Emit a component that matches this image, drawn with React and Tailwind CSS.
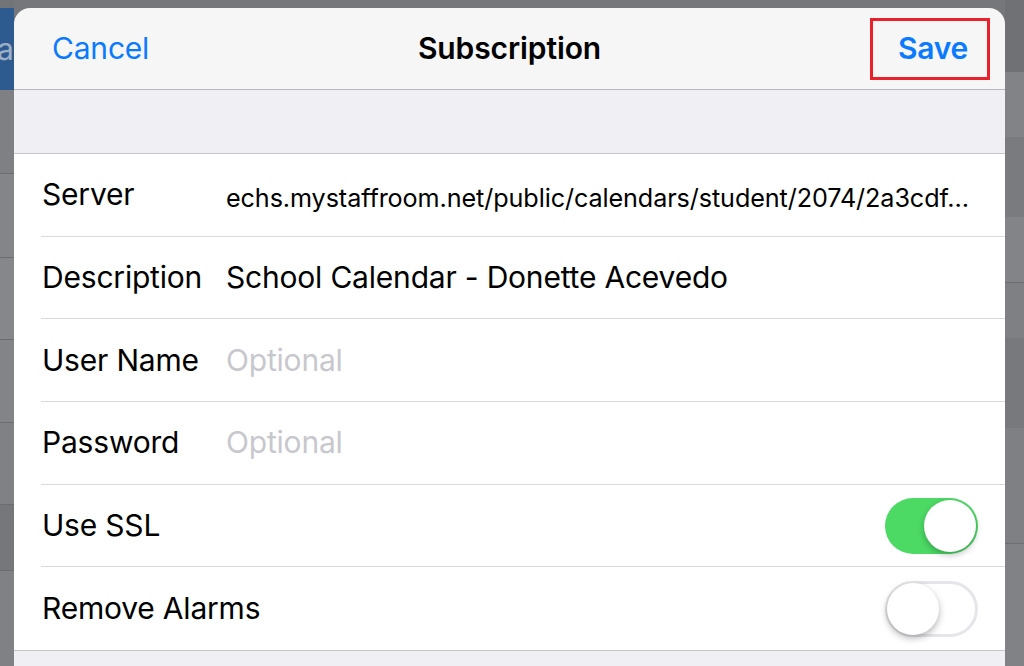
import React from "react";

const leftBands = [
  { h: 8, c: "bg-[#737478]" },
  { h: 82, c: "bg-[#2d5b90]", text: true },
  { h: 83, c: "bg-[#7f8084]" },
  { h: 1, c: "bg-[#6c6d71]" },
  { h: 83, c: "bg-[#848589]" },
  { h: 1, c: "bg-[#6c6d71]" },
  { h: 81, c: "bg-[#86878b]" },
  { h: 1, c: "bg-[#6c6d71]" },
  { h: 82, c: "bg-[#838488]" },
  { h: 1, c: "bg-[#6c6d71]" },
  { h: 81, c: "bg-[#808185]" },
  { h: 1, c: "bg-[#6c6d71]" },
  { h: 65, c: "bg-[#76777b]" },
  { h: 1, c: "bg-[#6c6d71]" },
  { h: 96, c: "bg-[#808185]" },
];

const rightBands = [
  { h: 72, c: "bg-[#707175]" },
  { h: 65, c: "bg-[#828387]" },
  { h: 80, c: "bg-[#7a7b7f]" },
  { h: 65, c: "bg-[#838488]" },
  { h: 1, c: "bg-[#6c6d71]" },
  { h: 55, c: "bg-[#7f8084]" },
  { h: 90, c: "bg-[#78797d]" },
  { h: 115, c: "bg-[#7f8084]" },
  { h: 1, c: "bg-[#6c6d71]" },
  { h: 222, c: "bg-[#818286]" },
];

function Toggle({ on }) {
  if (on) {
    return (
      <div className="w-[93px] h-[56px] rounded-full bg-[#4cd964] flex items-center justify-end pr-[2px]">
        <div className="w-[52px] h-[52px] rounded-full bg-white shadow-[0_3px_6px_rgba(0,0,0,0.25)]" />
      </div>
    );
  }
  return (
    <div className="w-[93px] h-[56px] rounded-full bg-white border-[3px] border-[#e6e6ea] flex items-center">
      <div className="w-[52px] h-[52px] -ml-[1px] rounded-full bg-white shadow-[0_3px_7px_rgba(0,0,0,0.3)]" />
    </div>
  );
}

function Row({ label, children, last }) {
  return (
    <div className={`pl-[27px] bg-white ${last ? "border-b border-[#c8c7cc]" : ""}`}>
      <div
        className={`h-[82.7px] flex items-center pr-[27px] ${
          last ? "" : "border-b border-[#d9d9dd]"
        }`}
      >
        <div className="w-[185px] shrink-0 pl-[1px] text-[30px] text-black tracking-[-0.2px] whitespace-nowrap">
          {label}
        </div>
        <div className="flex-1 min-w-0 flex items-center">{children}</div>
      </div>
    </div>
  );
}

export default function App() {
  return (
    <div
      className="w-[1024px] h-[666px] overflow-hidden flex bg-[#76777b]"
      style={{ fontFamily: "Inter, 'Liberation Sans', sans-serif" }}
    >
      <div className="w-[14px] shrink-0 flex flex-col">
        {leftBands.map((b, i) => (
          <div
            key={i}
            className={`${b.c} shrink-0 overflow-hidden flex items-center`}
            style={{ height: b.h }}
          >
            {b.text && (
              <span className="ml-[-3px] text-[30px] leading-none text-[#9fb0c6] whitespace-nowrap">
                a
              </span>
            )}
          </div>
        ))}
      </div>

      <div className="w-[991px] shrink-0 mt-[8px] flex flex-col">
        <div className="h-[82px] shrink-0 bg-[#f6f6f7] rounded-t-[16px] border-b border-[#b8b8bd] flex items-center pl-[38px] pr-[15px]">
          <div className="flex-1">
            <span className="text-[30px] text-[#0a7aff] tracking-[-0.2px]">Cancel</span>
          </div>
          <span className="text-[30px] font-semibold text-black tracking-[-0.1px] mr-[23px]">
            Subscription
          </span>
          <div className="flex-1 flex justify-end">
            <div className="w-[120px] h-[62px] border-[3px] border-[#e8212b] flex items-center justify-center pl-[6px]">
              <span className="text-[30px] font-semibold text-[#0a7aff] tracking-[-0.2px]">Save</span>
            </div>
          </div>
        </div>
        <div className="h-[64px] shrink-0 bg-[#efeff4] border-b border-[#c8c7cc]" />
        <Row label="Server">
          <span className="block whitespace-nowrap text-[25.2px] text-black pt-[8px] tracking-[-0.1px]">
            echs.mystaffroom.net/public/calendars/student/2074/2a3cdf…
          </span>
        </Row>
        <Row label="Description">
          <span className="whitespace-nowrap text-[30px] text-black tracking-[-0.2px]">
            School Calendar - Donette Acevedo
          </span>
        </Row>
        <Row label="User Name">
          <span className="text-[30px] text-[#c7c7cd] tracking-[-0.2px]">Optional</span>
        </Row>
        <Row label="Password">
          <span className="text-[30px] text-[#c7c7cd] tracking-[-0.2px]">Optional</span>
        </Row>
        <Row label="Use SSL">
          <div className="ml-auto">
            <Toggle on />
          </div>
        </Row>
        <Row label="Remove Alarms" last>
          <div className="ml-auto">
            <Toggle on={false} />
          </div>
        </Row>
        <div className="flex-1 bg-[#efeff4]" />
      </div>

      <div className="w-[19px] shrink-0 flex flex-col">
        {rightBands.map((b, i) => (
          <div key={i} className={`${b.c} shrink-0`} style={{ height: b.h }} />
        ))}
      </div>
    </div>
  );
}
